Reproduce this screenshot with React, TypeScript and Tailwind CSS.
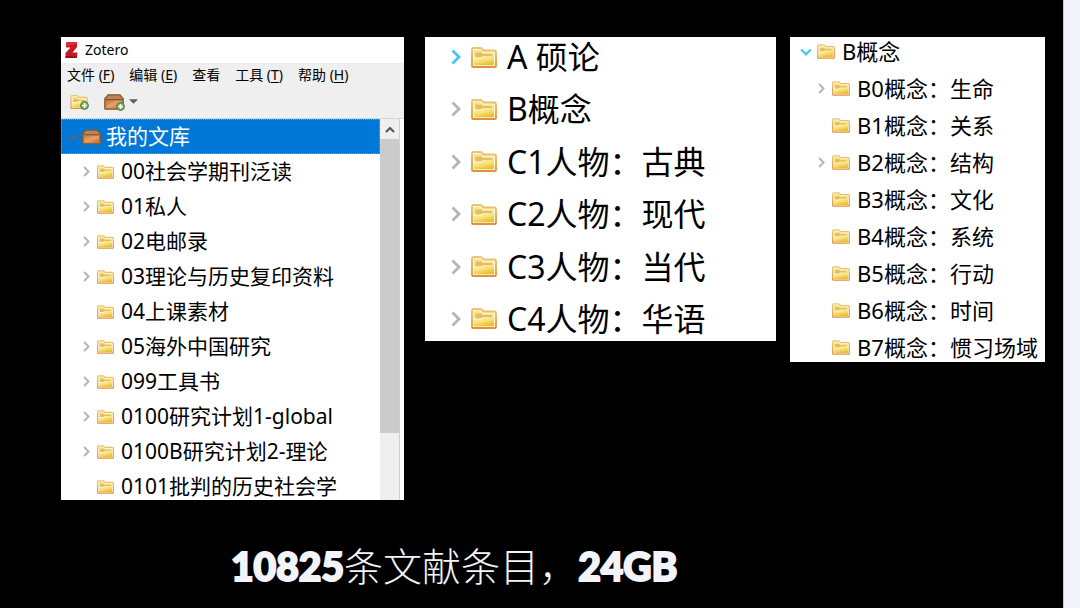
import { useId } from "react";

type Row = { label: string; leaf?: boolean; active?: boolean };

const library: Row[] = [
  { label: "00社会学期刊泛读" },
  { label: "01私人" },
  { label: "02电邮录" },
  { label: "03理论与历史复印资料" },
  { label: "04上课素材", leaf: true },
  { label: "05海外中国研究" },
  { label: "099工具书" },
  { label: "0100研究计划1-global" },
  { label: "0100B研究计划2-理论" },
  { label: "0101批判的历史社会学", leaf: true },
];

const people: Row[] = [
  { label: "A 硕论", active: true },
  { label: "B概念" },
  { label: "C1人物：古典" },
  { label: "C2人物：现代" },
  { label: "C3人物：当代" },
  { label: "C4人物：华语" },
];

const concepts: Row[] = [
  { label: "B0概念：生命" },
  { label: "B1概念：关系", leaf: true },
  { label: "B2概念：结构" },
  { label: "B3概念：文化", leaf: true },
  { label: "B4概念：系统", leaf: true },
  { label: "B5概念：行动", leaf: true },
  { label: "B6概念：时间", leaf: true },
  { label: "B7概念：惯习场域", leaf: true },
];

const menus = [
  { name: "文件", key: "F" },
  { name: "编辑", key: "E" },
  { name: "查看" },
  { name: "工具", key: "T" },
  { name: "帮助", key: "H" },
];

function Folder({ className }: { className: string }) {
  const id = useId();
  return (
    <svg viewBox="0 0 26 21" className={className} aria-hidden="true">
      <defs>
        <linearGradient id={id} x1="0" y1="0" x2="0.5" y2="1">
          <stop offset="0" stopColor="#fdf3b4" />
          <stop offset="0.5" stopColor="#f8e27c" />
          <stop offset="1" stopColor="#e8bf34" />
        </linearGradient>
        <linearGradient id={`${id}e`} x1="0" y1="0" x2="0" y2="1">
          <stop offset="0" stopColor="#ecc670" />
          <stop offset="1" stopColor="#df8f3f" />
        </linearGradient>
      </defs>
      <path d="M1 19V2.500Q1 1 2.500 1H10l2.500 2.500h11Q25 3.500 25 5v14q0 1-1 1H2q-1 0-1-1Z" fill="#fff8d6" stroke={`url(#${id}e)`} strokeWidth="1.800" />
      <path d="M3 3h6.500l2.500 2.500h11V10H3Z" fill="#f8e496" />
      <path d="M4.500 5.500h6.500v1.500h10v2H11.500l-2 1.500h-5Z" fill="#e3bf62" />
      <path d="M3 18.300V11.500h7.500l2-2H23v8.800Z" fill={`url(#${id})`} />
    </svg>
  );
}

function Box({ className }: { className: string }) {
  const id = useId();
  return (
    <svg viewBox="0 0 20 16" className={className} aria-hidden="true">
      <defs>
        <linearGradient id={id} x1="0" y1="0" x2="1" y2="1">
          <stop offset="0" stopColor="#c5763c" />
          <stop offset="0.5" stopColor="#e8a26c" />
          <stop offset="1" stopColor="#cb6c30" />
        </linearGradient>
      </defs>
      <path d="M4 .8h12l3.200 4v9.600q0 .8-.8.8H1.600q-.8 0-.8-.8V4.800Z" fill="#bd8550" stroke="#85562c" strokeWidth="1.200" />
      <path d="M2.200 6.500h15.600v7.500H2.200Z" fill={`url(#${id})`} />
      <path d="M1.500 5.600h17" stroke="#865427" strokeWidth="1.200" />
    </svg>
  );
}

function Chevron({ down, className }: { down?: boolean; className: string }) {
  return (
    <svg viewBox="0 0 10 16" className={className} fill="none" stroke="currentColor" strokeWidth="2.800" aria-hidden="true">
      <path d={down ? "M-1 5.500 5 11.500 11 5.500" : "M1.500 1.500 8 8l-6.500 6.500"} />
    </svg>
  );
}

function Plus() {
  return (
    <svg viewBox="0 0 10 10" className="absolute -bottom-px -right-px size-[9px]" aria-hidden="true">
      <circle cx="5" cy="5" r="4.200" fill="#7fb05f" stroke="#4f8a3c" strokeWidth="1.400" />
      <path d="M5 2.200v5.600M2.200 5h5.600" stroke="#fff" strokeWidth="1.800" />
    </svg>
  );
}

export default function App() {
  return (
    <div className="flex min-h-screen bg-black font-['Noto_Sans','Noto_Sans_CJK_SC',sans-serif] text-black">
      <main className="flex min-w-0 flex-1 flex-col pt-[37px]">
        <div className="flex items-start pl-[61px] pr-[18px]">
          <section className="mr-[21px] min-w-0 flex-[343] bg-white" aria-label="Zotero">
            <header className="flex h-[26px] items-center gap-[7px] pl-1 text-sm">
              <svg viewBox="0 0 13 16" className="h-4 w-[13px]" aria-hidden="true">
                <path d="M1.500 0H12v5L7.500 10.500h5L11.700 16H.5v-5L5.500 5.500H1Z" fill="#c41a20" />
                <path d="M1.500 0H12v2L1 4Z" fill="#df3134" />
                <path d="M.5 14h11.500l-.3 2H.5Z" fill="#94131a" />
              </svg>
              <h1>Zotero</h1>
            </header>
            <div className="border-b border-[#d5d5d5] bg-[#efefef]">
              <nav className="flex h-6 items-center gap-[15px] whitespace-nowrap pl-[6px] text-sm">
                {menus.map((m) => (
                  <button key={m.name} type="button">
                    {m.name}
                    {m.key && <> (<u className="underline-offset-2">{m.key}</u>)</>}
                  </button>
                ))}
              </nav>
              <div className="flex h-[31px] items-center pb-[2px] pl-[9px]">
                <button type="button" aria-label="新建分类" className="relative mr-4">
                  <Folder className="h-[14px] w-[18px]" />
                  <Plus />
                </button>
                <button type="button" aria-label="新建文库" className="flex items-center gap-[5px]">
                  <span className="relative">
                    <Box className="h-4 w-5" />
                    <Plus />
                  </span>
                  <svg viewBox="0 0 8 4" className="h-[5px] w-[9px]" aria-hidden="true">
                    <path d="M0 0h8L4 4Z" fill="#5d5d5d" />
                  </svg>
                </button>
              </div>
            </div>
            <div className="flex h-[381px] overflow-hidden">
              <ul className="min-w-0 flex-1 whitespace-nowrap text-[21px] leading-[35px]">
                <li>
                  <button type="button" className="flex h-[35px] w-full items-center border border-dotted border-[#62a6df] bg-[#0078d7] pl-[7px] text-white">
                    <Chevron down className="mr-[5px] h-[14px] w-[8px] overflow-visible text-[#53687c]" />
                    <Box className="mr-[5px] h-4 w-[19px]" />
                    我的文库
                  </button>
                </li>
                {library.map((r) => (
                  <li key={r.label}>
                    <button type="button" className="flex h-[35px] w-full items-center pl-[22px]">
                      <span className="w-[14px]">{!r.leaf && <Chevron className="h-[11px] w-[7px] text-[#b4b4b4]" />}</span>
                      <Folder className="mr-[7px] h-[14px] w-[17px]" />
                      {r.label}
                    </button>
                  </li>
                ))}
              </ul>
              <div className="mr-1 flex w-5 flex-col border-r border-[#cfcfcf] bg-[#efefef]">
                <button type="button" aria-label="向上滚动" className="flex h-5 items-center justify-center">
                  <svg viewBox="0 0 10 7" className="h-[7px] w-[10px]" fill="none" stroke="#555" strokeWidth="2" aria-hidden="true">
                    <path d="m1 6 4-4 4 4" />
                  </svg>
                </button>
                <div className="h-[294px] bg-[#cbcbcb]" />
              </div>
            </div>
          </section>

          <section className="mr-[14px] min-w-0 flex-[351] bg-white" aria-label="人物">
            <ul className="flex h-[304px] flex-col justify-between whitespace-nowrap pb-[2px] text-[32px] leading-10">
              {people.map((r) => (
                <li key={r.label}>
                  <button type="button" className="flex h-10 items-center pl-[26px]">
                    <Chevron className={r.active ? "mr-[10px] h-4 w-[10px] text-[#3fc8f4]" : "mr-[10px] h-4 w-[10px] text-[#b4b4b4]"} />
                    <Folder className="mr-[10px] h-[21px] w-[26px]" />
                    {r.label}
                  </button>
                </li>
              ))}
            </ul>
          </section>

          <section className="min-w-0 flex-[255] bg-white" aria-label="概念">
            <ul className="flex flex-col gap-[9px] whitespace-nowrap pb-px text-[22px] leading-7">
              <li>
                <button type="button" className="flex h-7 items-center pl-3">
                  <Chevron down className="mr-[7px] h-[13px] w-[8px] overflow-visible text-[#3fc8f4]" />
                  <Folder className="mr-[7px] h-[15px] w-[18px]" />
                  B概念
                </button>
              </li>
              {concepts.map((r) => (
                <li key={r.label}>
                  <button type="button" className="flex h-7 items-center pl-7">
                    <span className="w-[14px]">{!r.leaf && <Chevron className="h-[11px] w-[7px] text-[#b4b4b4]" />}</span>
                    <Folder className="mr-[7px] h-[15px] w-[18px]" />
                    {r.label}
                  </button>
                </li>
              ))}
            </ul>
          </section>
        </div>

        <p className="mt-[42px] whitespace-nowrap pl-[231px] font-['Lato','Noto_Sans_CJK_SC',sans-serif] text-[39px] font-light leading-[48px] text-[#f3f4fa]">
          <span className="font-black [-webkit-text-stroke:2px_#f3f4fa]">10825</span>
          条文献条目，
          <span className="font-black [-webkit-text-stroke:2px_#f3f4fa]">24GB</span>
        </p>
      </main>
      <aside className="w-[17px] border-l border-[#c8c8cc] bg-[#f3f4fa]" />
    </div>
  );
}
